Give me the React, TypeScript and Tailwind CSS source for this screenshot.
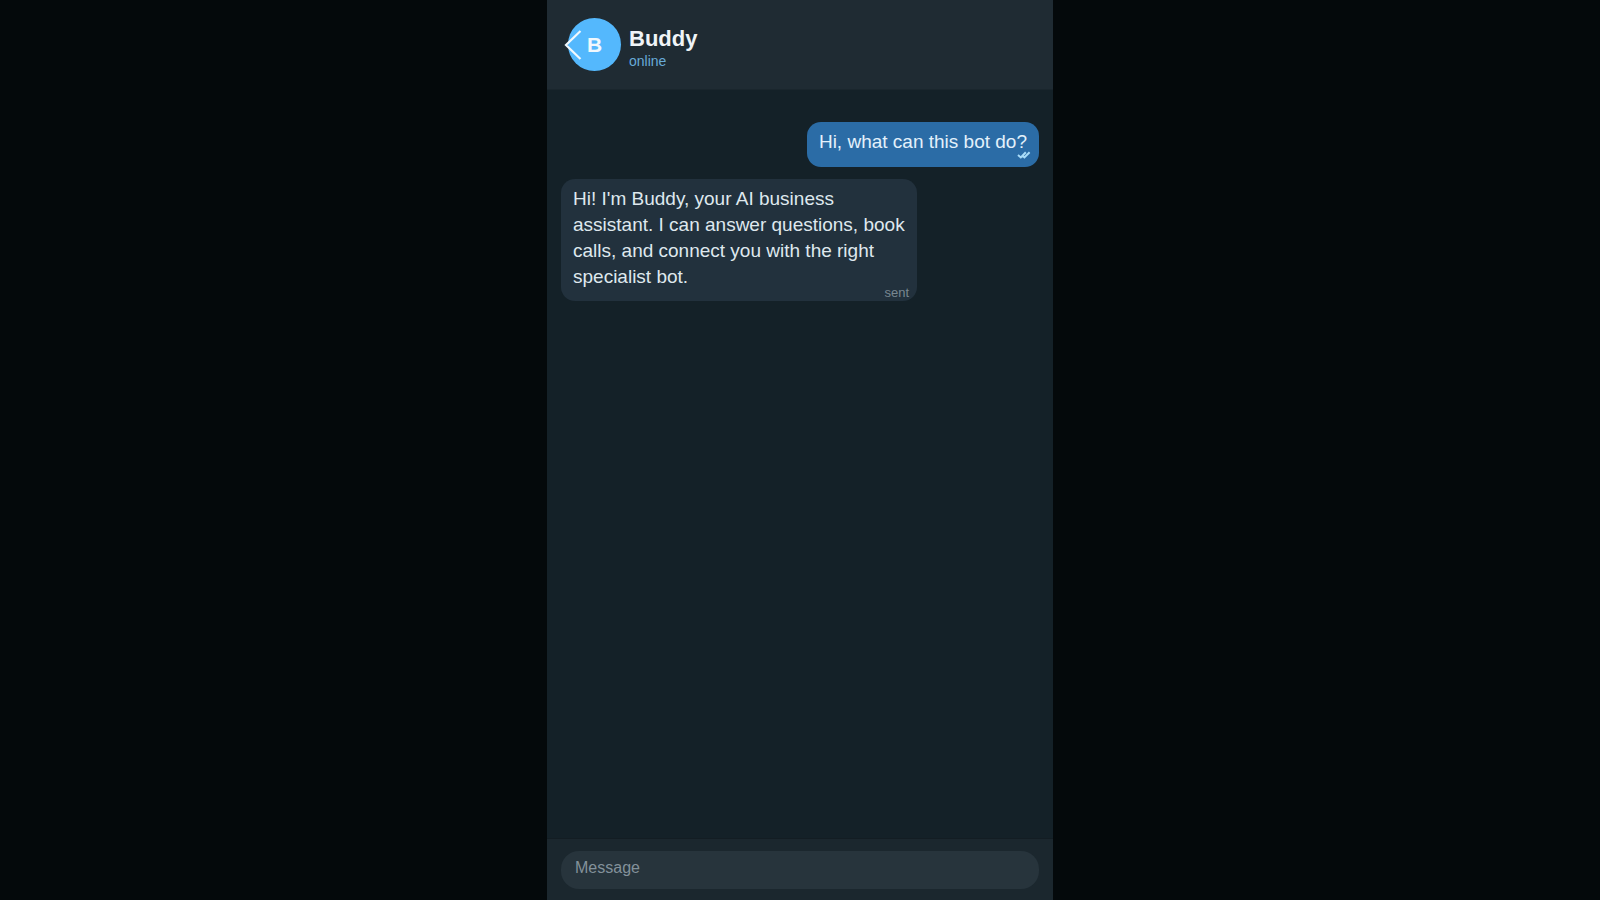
type Message = { id: number; text: string; outgoing: boolean };

const messages: Message[] = [
  { id: 1, text: 'Hi, what can this bot do?', outgoing: true },
  {
    id: 2,
    text: "Hi! I'm Buddy, your AI business assistant. I can answer questions, book calls, and connect you with the right specialist bot.",
    outgoing: false,
  },
];

function BackIcon() {
  return (
    <svg width="18" height="32" viewBox="0 0 18 32" fill="none" stroke="#f1f8fd" strokeWidth="2.2" aria-hidden="true">
      <path d="M16.5 2 2 16l14.500 14" />
    </svg>
  );
}

function ReadIcon() {
  return (
    <svg width="14" height="8" viewBox="0 0 14 8" fill="none" stroke="#a9dcf8" strokeWidth="2" aria-label="read" role="img">
      <path d="M1 4 3.800 6.400 8.800 1.200M5.800 5 7.400 6.400 12.600 1.200" />
    </svg>
  );
}

function Header() {
  return (
    <header className="flex h-[90px] shrink-0 items-center gap-2 border-b border-[#1a262d] bg-[#1f2b33] pl-[21px]">
      <div className="relative">
        <div className="flex size-[53px] items-center justify-center rounded-full bg-[#54b8fd] text-[21px] font-bold text-[#f1f8fd]">
          B
        </div>
        <button type="button" aria-label="Back" className="absolute top-[11px] -left-1">
          <BackIcon />
        </button>
      </div>
      <div className="pt-2">
        <h1 className="text-[22px] leading-6 font-bold text-[#f0f4f7]">Buddy</h1>
        <p className="text-sm leading-5 text-[#67aad8]">online</p>
      </div>
    </header>
  );
}

function Bubble({ message }: { message: Message }) {
  return (
    <li
      className={
        message.outgoing
          ? 'relative max-w-[356px] self-end rounded-[14px] bg-[#2b6ca6] px-3 pt-[7px] pb-3 text-[#e3f1fb]'
          : 'relative max-w-[356px] self-start rounded-[14px] bg-[#22313d] px-3 pt-[7px] pb-[11px] text-[#dfe8ee]'
      }
    >
      <p className="text-[19px] leading-[26px]">{message.text}</p>
      {message.outgoing ? (
        <span className="absolute right-2 bottom-2">
          <ReadIcon />
        </span>
      ) : (
        <span className="absolute right-2 bottom-0 text-[13px] leading-4 text-[#788791]">sent</span>
      )}
    </li>
  );
}

export default function App() {
  return (
    <div className="flex min-h-screen justify-center bg-[#04090b] font-['Liberation_Sans',Arial,sans-serif]">
      <main className="flex w-full max-w-[506px] flex-col bg-[#142128]">
        <Header />
        <ul className="flex flex-1 flex-col gap-3 px-3.5 pt-8">
          {messages.map((message) => (
            <Bubble key={message.id} message={message} />
          ))}
        </ul>
        <form className="border-t border-[#131d23] bg-[#1b272e] px-3.5 pt-3 pb-[11px]" onSubmit={(event) => event.preventDefault()}>
          <input
            type="text"
            aria-label="Message"
            placeholder="Message"
            className="block h-[38px] w-full rounded-[18px] bg-[#27343c] px-3.5 pb-1 text-base text-[#dfe8ee] outline-none placeholder:text-[#83919a]"
          />
        </form>
      </main>
    </div>
  );
}
